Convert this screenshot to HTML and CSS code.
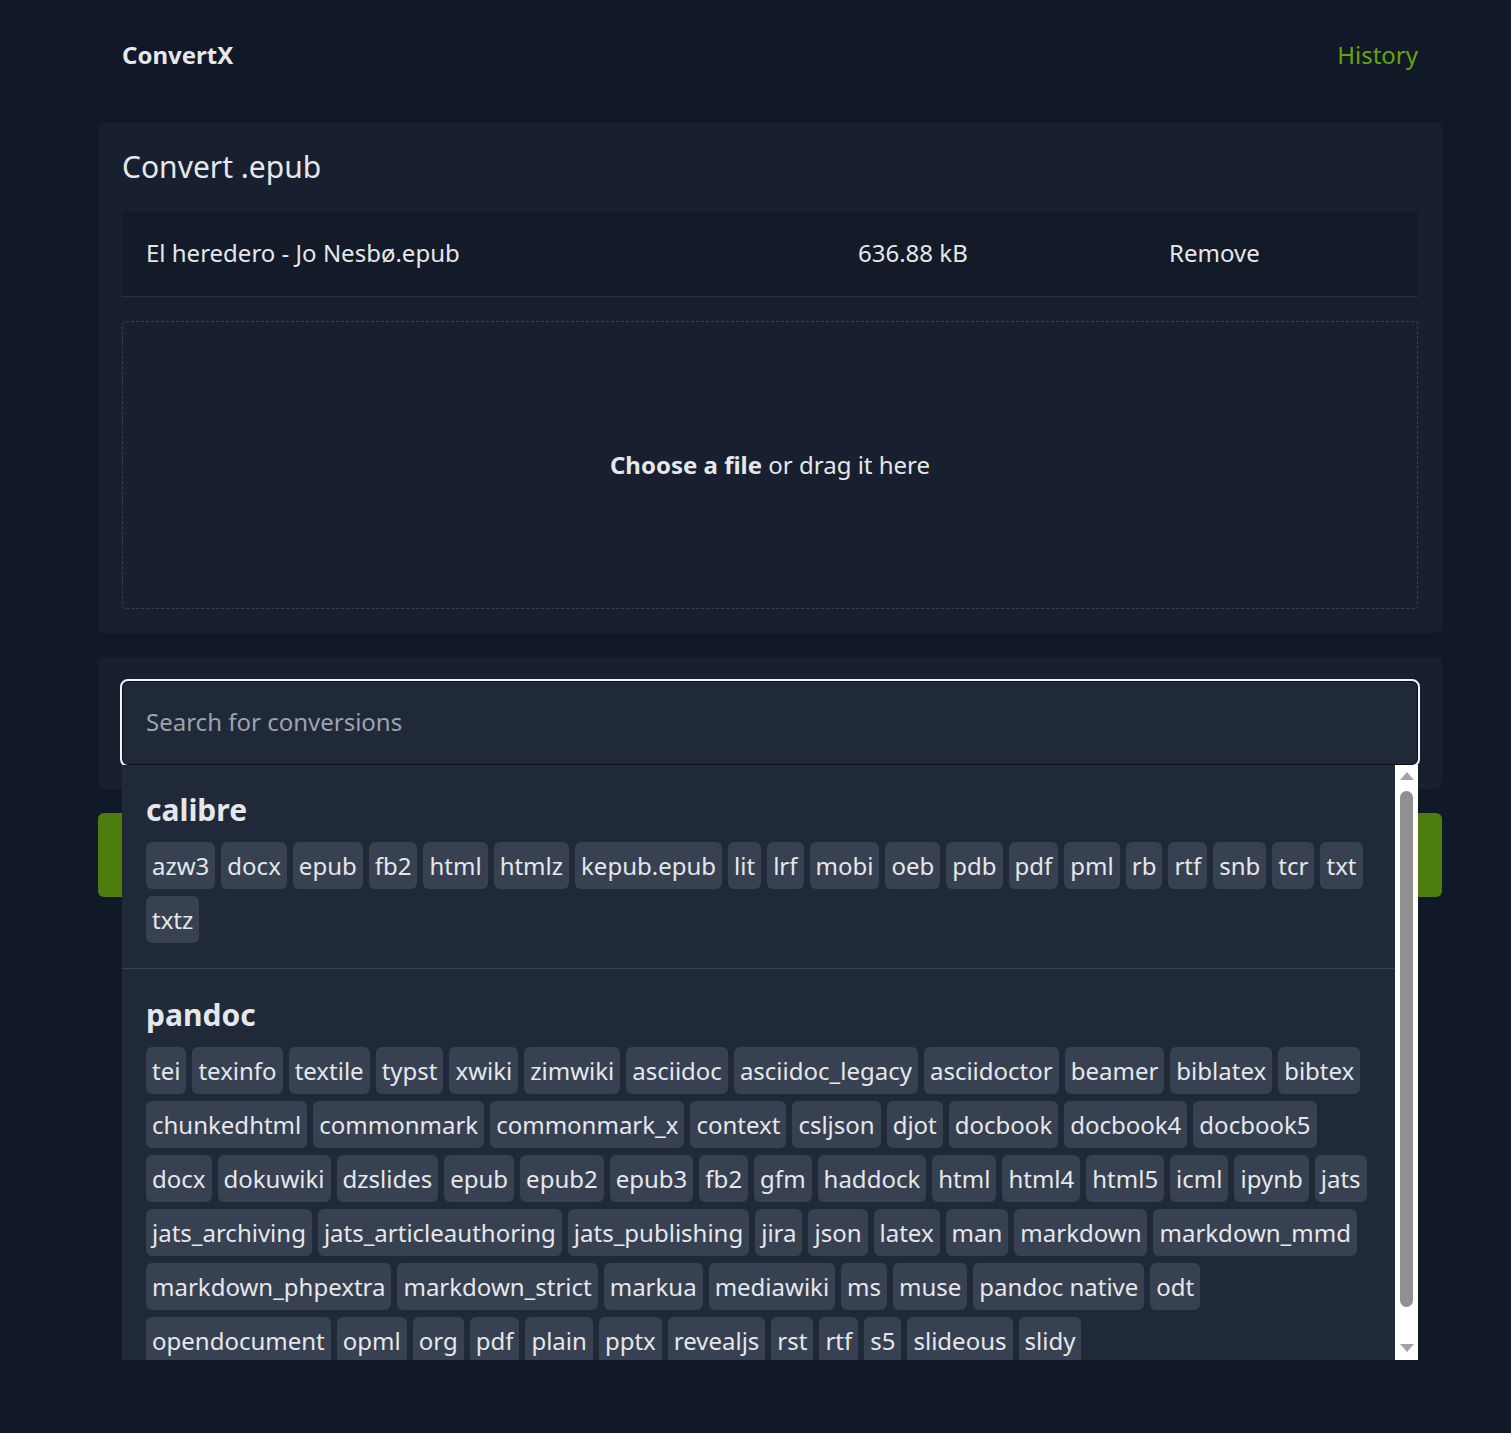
FILE: index.html
```html
<!DOCTYPE html>
<html lang="en">
<head>
  <meta charset="UTF-8" />
  <title>ConvertX</title>
  <link rel="stylesheet" href="styles.css">
</head>
<body>
  <div class="page">
    <header class="topbar">
      <a class="brand" href="#">ConvertX</a>
      <a class="nav-link" href="#">History</a>
    </header>

    <main>
      <article class="card">
        <h1 class="card-title">Convert .epub</h1>
        <div class="file-row">
          <span>El heredero - Jo Nesbø.epub</span>
          <span>636.88 kB</span>
          <span>Remove</span>
        </div>
        <div class="dropzone">
          <span><b>Choose a file</b> or drag it here</span>
        </div>
      </article>

      <article class="card">
        <div class="search">
          <input class="search-input" type="text" placeholder="Search for conversions">
          <div class="dropdown">
            <div class="dropdown-list">
              <section class="engine">
                <h2>calibre</h2>
                <div class="targets">
                  <button class="target">azw3</button>
                  <button class="target">docx</button>
                  <button class="target">epub</button>
                  <button class="target">fb2</button>
                  <button class="target">html</button>
                  <button class="target">htmlz</button>
                  <button class="target">kepub.epub</button>
                  <button class="target">lit</button>
                  <button class="target">lrf</button>
                  <button class="target">mobi</button>
                  <button class="target">oeb</button>
                  <button class="target">pdb</button>
                  <button class="target">pdf</button>
                  <button class="target">pml</button>
                  <button class="target">rb</button>
                  <button class="target">rtf</button>
                  <button class="target">snb</button>
                  <button class="target">tcr</button>
                  <button class="target">txt</button>
                  <button class="target">txtz</button>
                </div>
              </section>
              <section class="engine">
                <h2>pandoc</h2>
                <div class="targets">
                  <button class="target">tei</button>
                  <button class="target">texinfo</button>
                  <button class="target">textile</button>
                  <button class="target">typst</button>
                  <button class="target">xwiki</button>
                  <button class="target">zimwiki</button>
                  <button class="target">asciidoc</button>
                  <button class="target">asciidoc_legacy</button>
                  <button class="target">asciidoctor</button>
                  <button class="target">beamer</button>
                  <button class="target">biblatex</button>
                  <button class="target">bibtex</button>
                  <button class="target">chunkedhtml</button>
                  <button class="target">commonmark</button>
                  <button class="target">commonmark_x</button>
                  <button class="target">context</button>
                  <button class="target">csljson</button>
                  <button class="target">djot</button>
                  <button class="target">docbook</button>
                  <button class="target">docbook4</button>
                  <button class="target">docbook5</button>
                  <button class="target">docx</button>
                  <button class="target">dokuwiki</button>
                  <button class="target">dzslides</button>
                  <button class="target">epub</button>
                  <button class="target">epub2</button>
                  <button class="target">epub3</button>
                  <button class="target">fb2</button>
                  <button class="target">gfm</button>
                  <button class="target">haddock</button>
                  <button class="target">html</button>
                  <button class="target">html4</button>
                  <button class="target">html5</button>
                  <button class="target">icml</button>
                  <button class="target">ipynb</button>
                  <button class="target">jats</button>
                  <button class="target">jats_archiving</button>
                  <button class="target">jats_articleauthoring</button>
                  <button class="target">jats_publishing</button>
                  <button class="target">jira</button>
                  <button class="target">json</button>
                  <button class="target">latex</button>
                  <button class="target">man</button>
                  <button class="target">markdown</button>
                  <button class="target">markdown_mmd</button>
                  <button class="target">markdown_phpextra</button>
                  <button class="target">markdown_strict</button>
                  <button class="target">markua</button>
                  <button class="target">mediawiki</button>
                  <button class="target">ms</button>
                  <button class="target">muse</button>
                  <button class="target">pandoc native</button>
                  <button class="target">odt</button>
                  <button class="target">opendocument</button>
                  <button class="target">opml</button>
                  <button class="target">org</button>
                  <button class="target">pdf</button>
                  <button class="target">plain</button>
                  <button class="target">pptx</button>
                  <button class="target">revealjs</button>
                  <button class="target">rst</button>
                  <button class="target">rtf</button>
                  <button class="target">s5</button>
                  <button class="target">slideous</button>
                  <button class="target">slidy</button>
                </div>
              </section>
            </div>
            <div class="scrollbar">
              <span class="arrow up"></span>
              <span class="thumb"></span>
              <span class="arrow down"></span>
            </div>
          </div>
        </div>
      </article>

      <button class="convert-btn">Convert</button>
    </main>
  </div>
</body>
</html>
```

FILE: styles.css
```css
body {
  margin: 0;
  background: #111827;
  color: #e5e7eb;
  font-family: 'Noto Sans', 'Open Sans', sans-serif;
  font-size: 24px;
  line-height: 36px;
}

.page {
  width: 1344px;
  min-height: 1433px;
  margin-left: 98px;
}

.topbar {
  display: flex;
  justify-content: space-between;
  align-items: center;
  padding: 37px 24px 49px;
}

.brand {
  color: #e5e7eb;
  font-weight: bold;
  text-decoration: none;
}

.nav-link {
  color: #65a30d;
  text-decoration: none;
}

.card {
  background: #182030;
  border-radius: 6px;
  padding: 24px;
  margin-bottom: 24px;
}

.card-title {
  margin: 0 0 24px;
  font-size: 30px;
  line-height: 42px;
  font-weight: normal;
  color: #e5e7eb;
}

.file-row {
  display: grid;
  grid-template-columns: 712px 311px 1fr;
  background: #131a28;
  border-bottom: 1px solid #263141;
}

.file-row span {
  padding: 23px 24px 25px;
}

.dropzone {
  margin-top: 24px;
  height: 286px;
  border: 1px dashed #374151;
  border-radius: 4px;
  display: flex;
  align-items: center;
  justify-content: center;
}

.search {
  position: relative;
}

.search-input {
  display: block;
  width: 100%;
  box-sizing: border-box;
  height: 84px;
  padding: 0 23px 3px;
  background: #1f2937;
  color: #e5e7eb;
  border: 1px solid #0b0f16;
  border-radius: 6px;
  outline: 2px solid #f3f4f6;
  font: inherit;
}

.search-input::placeholder {
  color: #9ca3af;
}

.dropdown {
  position: absolute;
  top: 100%;
  left: 0;
  right: 0;
  height: 595px;
  display: flex;
  background: #1f2937;
  z-index: 10;
}

.dropdown-list {
  flex: 1;
  overflow: hidden;
}

.engine {
  padding: 24px 24px 25px;
  border-bottom: 1px solid #374151;
}

.engine + .engine {
  padding-top: 25px;
}

.engine h2 {
  margin: 0 0 11px;
  font-size: 30px;
  line-height: 42px;
  color: #e5e7eb;
}

.targets {
  display: flex;
  flex-wrap: wrap;
  gap: 7px 6px;
}

.target {
  background: #374151;
  color: #e5e7eb;
  border: none;
  border-radius: 6px;
  padding: 6px;
  font: inherit;
  line-height: 35px;
}

.scrollbar {
  width: 23px;
  background: #fff;
  display: flex;
  flex-direction: column;
  align-items: center;
  padding: 7px 0 8px;
  box-sizing: border-box;
}

.arrow {
  width: 0;
  height: 0;
  border-left: 7.5px solid transparent;
  border-right: 7.5px solid transparent;
}

.arrow.up {
  border-bottom: 8px solid #a3a3a3;
}

.arrow.down {
  border-top: 8px solid #a3a3a3;
  margin-top: auto;
}

.thumb {
  margin-top: 11px;
  width: 13px;
  height: 516px;
  border-radius: 7px;
  background: #909090;
}

.convert-btn {
  display: block;
  width: 100%;
  height: 84px;
  background: #4d7c0f;
  color: #fff;
  border: none;
  border-radius: 6px;
  font: inherit;
}
```
